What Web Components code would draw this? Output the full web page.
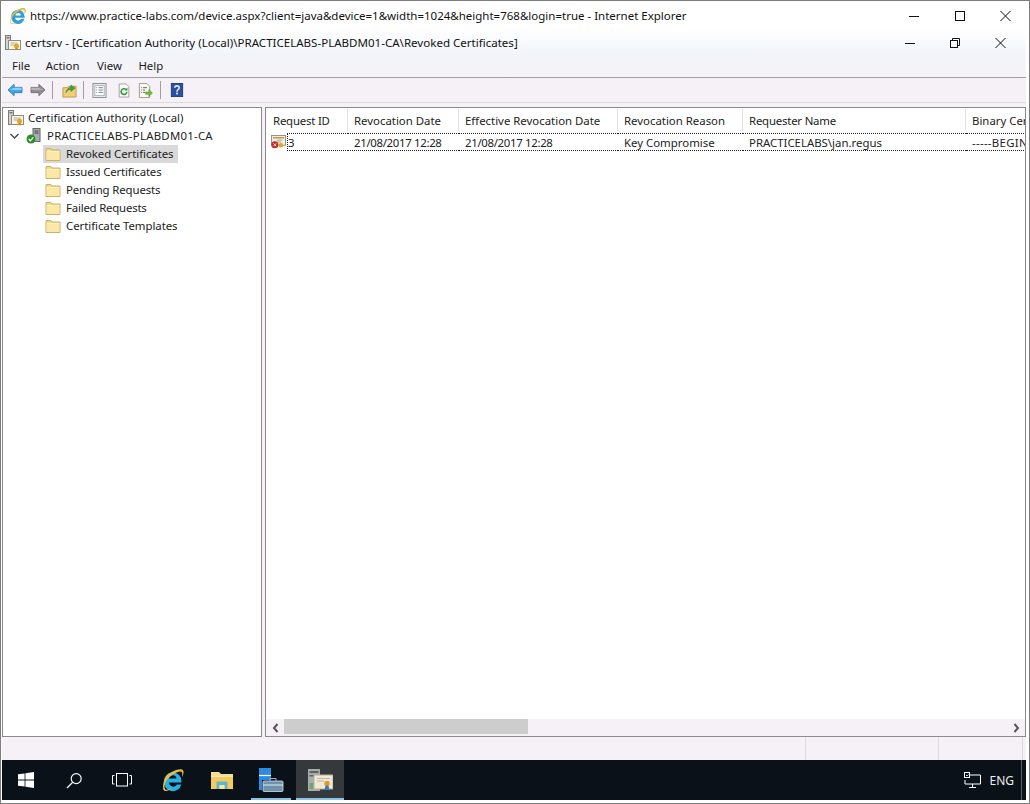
<!DOCTYPE html>
<html><head><meta charset="utf-8">
<style>html,body{margin:0;padding:0;background:#fff}body{width:1030px;height:804px;overflow:hidden;font:11.4px "Noto Sans","Open Sans",sans-serif;color:#1a1a1a}</style>
</head><body>
<template id="icons">
<svg data-n="ie" viewBox="0 0 22 22"><path d="M3 13a8 8 0 0 1 15-5l1.500 5H7.500a4 4 0 0 0 7.500 1.500h3.800A8 8 0 0 1 3 13z" fill="#2f9fd8"/><path d="M8 10.500h6.500a3.200 3.200 0 0 0-6.500 0z" fill="#fff"/><path d="M4.500 8C8 4 15 .5 19 1.500c2.500 1 1.500 5-.5 8 .5-3 1-5.500-1-6C14 3 8 7 5 11c-3 4-3.500 8-1.500 9 2 .8 5-.8 7-2-3 3-7.500 4-8.500 2-1-2.500.5-8 2.500-12z" fill="#e8b63c"/></svg>
<svg data-n="cert" viewBox="0 0 16 16"><rect x="0.500" y="0.500" width="5" height="14" fill="#d5d5d5" stroke="#7b7b7b"/><rect x="1.500" y="2" width="3" height="1.500" fill="#777"/><rect x="3.500" y="5.500" width="12" height="9" fill="#fbf6e4" stroke="#8c8c80"/><path d="M5.500 8h7M5.500 10h4" stroke="#b5b09a"/><circle cx="11.500" cy="11" r="2.500" fill="#e2a52c"/><path d="M10.500 13l-.5 2.500 1.500-1 1.500 1-.5-2.500z" fill="#c9841c"/></svg>
<svg data-n="ca" viewBox="0 0 16 16"><rect x="7" y="0.500" width="7" height="13" fill="#a9adb0" stroke="#63686c"/><path d="M8.500 3h4M8.500 5h4" stroke="#3d4347"/><circle cx="5" cy="11" r="4.500" fill="#2c8f2c"/><path d="M2.800 11l1.600 1.700 2.900-3.300" fill="none" stroke="#fff" stroke-width="1.300"/></svg>
<svg data-n="folder" viewBox="0 0 16 16"><path d="M1 2.500h5l1 1.500h8v10.500H1z" fill="#f4d98a" stroke="#cdb06a"/><rect x="1.500" y="5" width="13" height="9" fill="#fbe7a6"/><path d="M2 5.500h12" stroke="#fff3c8"/></svg>
<svg data-n="back" viewBox="0 0 18 16"><path d="M1 8l7-6.500V5h9v6H8v3.500z" fill="#3fa4e8" stroke="#2a7fc0"/><path d="M8 5.500h8.500V8H3z" fill="#8fd0f5"/></svg>
<svg data-n="fwd" viewBox="0 0 18 16"><path d="M17 8l-7-6.500V5H1v6h9v3.500z" fill="#8f8f8f" stroke="#6f6f6f"/><path d="M10 5.500H1.500V8H15z" fill="#b5b5b5"/></svg>
<svg data-n="up" viewBox="0 0 16 16"><path d="M1 5h5l1-1.500h8v11.500H1z" fill="#f0cf76" stroke="#b59b52"/><path d="M4 10.500C5 6.500 7.500 4.500 9.500 4.500V2L14 5.500 9.500 9V6.800c-2 0-4 1.200-5.500 3.700z" fill="#3fa23f" stroke="#2b7d2b" stroke-width=".5"/></svg>
<svg data-n="props" viewBox="0 0 16 16"><rect x="1" y="0.500" width="14" height="15" fill="#eef1f3" stroke="#8a9095"/><rect x="3" y="2.500" width="10" height="11" fill="#fff" stroke="#a8adb1"/><path d="M4.500 5h1M7 5h4.500M4.500 7.500h1M7 7.500h4.500M4.500 10h1M7 10h4.500" stroke="#6f7a83"/></svg>
<svg data-n="refresh" viewBox="0 0 16 16"><path d="M2.500 0.500h8l3 3v12h-11z" fill="#fbfbfb" stroke="#9a9a9a"/><path d="M11.300 9.500a3.300 3.300 0 1 1-1-2.600" fill="none" stroke="#2f9c3a" stroke-width="1.800"/><path d="M12 4.500v3.500H8.500z" fill="#2f9c3a"/></svg>
<svg data-n="export" viewBox="0 0 16 16"><path d="M1.500 0.500h8l3 3v12h-11z" fill="#fbfbf2" stroke="#9a9a8c"/><path d="M3.500 5h1M5.500 5h4M3.500 7.500h1M5.500 7.500h2M3.500 10h1M5.500 10h2" stroke="#555"/><path d="M8 9.500h3.500V7l4 3.700-4 3.700V12H8z" fill="#6dbb3c" stroke="#4b962a" stroke-width=".5"/></svg>
<svg data-n="help" viewBox="0 0 16 16"><rect x="1.500" y="0.500" width="13" height="15" fill="#2a4fa3" stroke="#1d3878"/><path d="M5.500 5.500C5.500 2.500 10.500 2.500 10.500 5.500 10.500 7.500 8 7.500 8 10" fill="none" stroke="#e8eefa" stroke-width="1.800"/><rect x="7" y="11" width="2" height="2" fill="#e8eefa"/></svg>
<svg data-n="revoked" viewBox="0 0 17 15"><rect x="0.500" y="0.500" width="15" height="10.500" fill="#f4efe0" stroke="#8e8e80"/><path d="M2 3h12" stroke="#b5823c" stroke-width="1.300"/><path d="M6 5.500h6M6 7.500h5" stroke="#a8a89a"/><circle cx="4" cy="10.500" r="3.800" fill="#c42a2a"/><path d="M2.500 9l3 3m0-3l-3 3" stroke="#fff"/><circle cx="10.500" cy="11" r="2.500" fill="#e2a52c"/></svg>
<svg data-n="win" viewBox="0 0 16 16"><path d="M0 2.300 6.600 1.400V7.600H0zM7.400 1.300 16 0V7.600H7.400zM0 8.400H6.600V14.600L0 13.700zM7.400 8.400H16V16L7.400 14.700z" fill="#fff"/></svg>
<svg data-n="search" viewBox="0 0 18 18"><circle cx="10.800" cy="7" r="5.300" fill="none" stroke="#fff" stroke-width="1.200"/><path d="M7 11 1 17" stroke="#fff" stroke-width="1.400"/></svg>
<svg data-n="taskview" viewBox="0 0 20 14"><rect x="4.500" y="0.500" width="11" height="12.500" fill="none" stroke="#fff"/><path d="M2.500 2.500H.5v8.500h2M17.500 2.500h2v8.500h-2" fill="none" stroke="#fff"/></svg>
<svg data-n="tbie" viewBox="0 0 22 24"><path d="M2 13.500a8.800 8.800 0 0 1 17-3.500l.5 4.500H7a4.500 4.500 0 0 0 8.300 2h4A8.800 8.800 0 0 1 2 13.500z" fill="#27b0e6"/><path d="M7 10.500h7.500a3.800 3.800 0 0 0-7.500 0z" fill="#0a1118"/><path d="M3.500 9C8 4 16 .5 20 1.500c2.500 1 1.500 5 0 7.500 .5-3 .5-5-1-5.500C15 3 8 8 5 12c-3 4-3 8-1.500 9.500 2 1 5-.8 7-2-3 3-7.500 4.500-9 2.500C.5 20 1 14 3.500 9z" fill="#e7bb44"/></svg>
<svg data-n="tbfolder" viewBox="0 0 22 17"><path d="M0 0h8l2 2h12v15H0z" fill="#f2dfa0"/><rect x="0" y="4" width="22" height="13" fill="#f7ca5c"/><rect x="0" y="4" width="22" height="1" fill="#fbe9b4"/><path d="M5.500 9.500h11V17H13.500V13h-5v4H5.500z" fill="#5fb5d0"/><rect x="8.500" y="13" width="5" height="4" fill="#fbe3a0"/></svg>
<svg data-n="tbserver" viewBox="0 0 25 24"><rect x="0" y="0" width="12" height="22" fill="#2f8be0"/><path d="M0 7.500h12" stroke="#fff" stroke-width="1.200"/><rect x="3" y="12" width="22" height="12" fill="#0a1118"/><rect x="4" y="13" width="20" height="10.500" rx="1" fill="#6f93ad" stroke="#d5e2ea" stroke-width=".8"/><path d="M4 17h20" stroke="#dfe9ef"/><path d="M11 13v-2.500h6V13" fill="none" stroke="#aac"/></svg>
<svg data-n="tbcert" viewBox="0 0 25 23"><rect x="0" y="0" width="12" height="22" fill="#a8acaa"/><rect x="1.500" y="2" width="9" height="2" fill="#5d615f"/><rect x="1.500" y="6" width="9" height="1.500" fill="#5d615f"/><rect x="1.500" y="14" width="4" height="6" fill="#74a06c"/><rect x="6" y="6" width="19" height="14" fill="#f0e8d4" stroke="#b4ae9a"/><path d="M9 9.500h13M9 12h7" stroke="#bdb6a2"/><circle cx="19" cy="14.500" r="2.700" fill="#dd9a2a"/><path d="M17.500 16.500l-1 5 2.500-1.500 2.500 1.500-1-5z" fill="#3f78b0"/></svg>
<svg data-n="net" viewBox="0 0 17 16"><path d="M3.500 3H16.500V12H1V8" fill="none" stroke="#fff"/><rect x="0.500" y="0.500" width="5" height="5" fill="#0a1118" stroke="#fff"/><path d="M2 3l1 1 1.500-1.500" stroke="#fff" fill="none" stroke-width=".8"/><path d="M8.500 12v3M5 15.500h7" stroke="#fff"/></svg>
</template>
<script>
const iconSource=document.getElementById('icons').content;
class XIcon extends HTMLElement{
  connectedCallback(){
    const s=this.shadowRoot||this.attachShadow({mode:'open'});
    const w=this.getAttribute('w')||16,h=this.getAttribute('h')||16;
    s.innerHTML=`<style>:host{display:inline-flex;flex:none;width:${w}px;height:${h}px}svg{width:100%;height:100%;display:block}</style>`;
    const svg=iconSource.querySelector(`[data-n="${this.getAttribute('name')}"]`);
    if(svg)s.appendChild(svg.cloneNode(true));
  }
}
customElements.define('x-icon',XIcon);

function def(name,html){
  customElements.define(name,class extends HTMLElement{
    constructor(){super();this.attachShadow({mode:'open'}).innerHTML=html;}
  });
}
def('ie-titlebar',`<style>
:host{display:flex;align-items:center;height:27px;padding-left:7px;background:#fff;flex:none;font-size:11.5px;color:#111}
.t{margin-left:3px;flex:1;white-space:nowrap}
.c{display:flex;padding-right:1px}
svg{display:block;stroke:#111;fill:none}
span.b{width:45.5px;height:12px;display:flex;justify-content:center}
</style><x-icon name="ie" w="18" h="18"></x-icon><span class="t"><slot></slot></span>
<div class="c">
<span class="b"><svg width="10" height="12"><path d="M0 6.500h10"/></svg></span>
<span class="b"><svg width="10" height="12"><rect x=".5" y="1.500" width="9" height="9"/></svg></span>
<span class="b"><svg width="11" height="12"><path d="M.5 1l10 10m0-10l-10 10"/></svg></span>
</div>`);
def('mmc-titlebar',`<style>
:host{display:flex;align-items:center;height:27px;padding-left:3px;flex:none;font-size:11.55px;color:#111}
.t{margin-left:4px;flex:1;white-space:nowrap}
.c{display:flex;padding-right:2.500px}
svg{display:block;stroke:#111;fill:none}
span.b{width:45.5px;height:12px;display:flex;justify-content:center}
</style><x-icon name="cert" w="16" h="16"></x-icon><span class="t"><slot></slot></span>
<div class="c">
<span class="b"><svg width="10" height="12"><path d="M0 6.500h10"/></svg></span>
<span class="b"><svg width="10" height="12"><rect x=".5" y="3.500" width="7" height="7"/><path d="M2.500 3.500V1.500h7v7h-2"/></svg></span>
<span class="b"><svg width="11" height="12"><path d="M.5 1l10 10m0-10l-10 10"/></svg></span>
</div>`);
def('menu-bar',`<style>
:host{display:flex;height:18px;padding-bottom:3px;align-items:center;flex:none;padding-left:1px;border-bottom:1px solid #a0a0a0}
</style><slot></slot>`);
def('menu-item',`<style>:host{display:block;padding:0 8.500px 0 9px}</style><slot></slot>`);
def('tool-bar',`<style>
:host{display:flex;align-items:center;height:24px;padding-left:5px;flex:none;border-bottom:1px solid #dcdcdc}
</style><slot></slot>`);
def('tool-sep',`<style>:host{display:block;flex:none;width:1px;height:18px;background:#a0a0a0}</style>`);
def('split-panes',`<style>:host{display:flex;gap:3px;flex:1;min-height:0;padding-top:4px}</style><slot></slot>`);
def('tree-pane',`<style>:host{display:block;flex:none;width:260px;background:#fff;border:1px solid #8a8a8a;padding-top:1px;box-sizing:border-box}</style><slot></slot>`);
def('tree-row',`<style>
:host{display:flex;align-items:center;height:18px;white-space:nowrap;color:#222}
.lab{padding:0 4px;height:18px;line-height:17px}
:host([selected]) .sel{background:#d9d9d9}
.sel{display:flex;align-items:center;height:18px}
</style><slot name="tw"></slot><div class="sel"><slot name="icon"></slot><span class="lab"><slot></slot></span></div>`);
def('list-pane',`<style>:host{display:flex;flex-direction:column;flex:1;min-width:0;background:#fff;border:1px solid #8a8a8a;box-sizing:border-box;overflow:hidden}</style><slot></slot>`);
def('list-header',`<style>:host{display:grid;grid-template-columns:82px 111px 159px 125px 223px 200px;height:22px;margin-top:1px;flex:none;width:max-content}</style><slot></slot>`);
def('list-col',`<style>:host{display:flex;align-items:center;padding-left:6px;box-sizing:border-box;border-right:1px solid #e3e3e3;white-space:nowrap;color:#222;overflow:hidden;height:22px}
:host([first]){padding-left:7px;letter-spacing:-.2px}</style><slot></slot>`);
def('list-row',`<style>:host{display:grid;grid-template-columns:21px 61px 111px 159px 125px 223px 200px;height:18px;margin-top:2px;flex:none;width:max-content;align-items:center}</style><slot></slot>`);
def('list-cell',`<style>:host{display:block;padding-left:6px;white-space:nowrap;color:#222;line-height:17px;height:18px;box-sizing:border-box;border-top:1px dotted #222;border-bottom:1px dotted #222;overflow:hidden}
:host([first]){padding-left:0;border-left:1px dotted #222}
:host([date]){letter-spacing:-.32px}
:host([wide]){letter-spacing:.3px}</style><slot></slot>`);
def('h-scroll',`<style>
:host{display:flex;height:17px;flex:none;margin-top:auto;background:#f6f1f6;align-items:center}
.a{width:18px;display:flex;justify-content:center;flex:none}
.tr{flex:1;height:15px;align-self:flex-start}
.th{width:244px;height:15px;background:#cdcdcd}
svg{display:block}
</style><span class="a"><svg width="7" height="10"><path d="M5.500 1L2 5l3.500 4" fill="none" stroke="#555" stroke-width="2"/></svg></span>
<div class="tr"><div class="th"></div></div>
<span class="a"><svg width="7" height="10"><path d="M1.500 1L5 5 1.500 9" fill="none" stroke="#555" stroke-width="2"/></svg></span>`);
def('status-bar',`<style>
:host{display:grid;grid-template-columns:804px 133px 84px 1fr;height:23px;flex:none}
div{border-right:1px solid #dcdcdc}
div:last-child{border:0}
</style><div></div><div></div><div></div><div></div>`);
def('task-bar',`<style>
:host{display:flex;align-items:center;height:40px;background:#0a1118;flex:none;color:#fff}
.end{margin-left:auto;display:flex;align-items:center;height:100%;padding-right:4px}
.lang{font-size:12px;margin-left:8px;margin-right:7px;color:#eee}
.edge{width:1px;height:100%;background:#5a6066}
</style><slot></slot><div class="end"><x-icon name="net" w="17" h="16"></x-icon><span class="lang">ENG</span><div class="edge"></div></div>`);
def('task-btn',`<style>
:host{display:flex;flex:none;width:48px;height:40px;align-items:center;justify-content:center;box-sizing:border-box;position:relative}
:host([running])::after{content:"";position:absolute;left:4px;right:4px;bottom:0;height:2px;background:#8ac3e6}
:host([active]){background:#35393c}
:host([active])::after{content:"";position:absolute;left:0;right:0;bottom:0;height:2px;background:#8ac3e6}
</style><slot></slot>`);
def('app-frame',`<style>
:host{display:flex;flex-direction:column;box-sizing:border-box;width:1030px;height:804px;border:1px solid #7d7d7d;padding:1px 0 0 1px;background:#fff}
.desk{flex:1;display:flex;flex-direction:column;min-height:0;margin-right:3px}
.inner{flex:1;display:flex;flex-direction:column;min-height:0;background:linear-gradient(#fff 0,#f1f5fa 26px,#f6f1f6 54px)}
.bottom{height:3px;flex:none;background:#fff}
</style><slot name="top"></slot><div class="desk"><div class="inner"><slot></slot></div><slot name="bar"></slot></div><div class="bottom"></div>`);
</script>
<app-frame>
  <ie-titlebar slot="top">https://www.practice-labs.com/device.aspx?client=java&amp;device=1&amp;width=1024&amp;height=768&amp;login=true - Internet Explorer</ie-titlebar>
  <mmc-titlebar>certsrv - [Certification Authority (Local)\PRACTICELABS-PLABDM01-CA\Revoked Certificates]</mmc-titlebar>
  <menu-bar><menu-item style="margin-right:-2px">File</menu-item><menu-item>Action</menu-item><menu-item>View</menu-item><menu-item style="margin-left:-1px">Help</menu-item></menu-bar>
  <tool-bar>
    <x-icon name="back" w="16" h="14"></x-icon><x-icon name="fwd" w="16" h="14" style="margin-left:7px"></x-icon><tool-sep style="margin:0 9px 0 6px"></tool-sep>
    <x-icon name="up" w="15" h="15"></x-icon><tool-sep style="margin:0 8px 0 6px"></tool-sep>
    <x-icon name="props" w="15" h="15"></x-icon><x-icon name="refresh" w="14" h="15" style="margin-left:10px"></x-icon><x-icon name="export" w="15" h="15" style="margin-left:7px"></x-icon><tool-sep style="margin:0 9px 0 7px"></tool-sep>
    <x-icon name="help" w="14" h="16"></x-icon>
  </tool-bar>
  <split-panes>
    <tree-pane>
      <tree-row><span slot="tw" style="width:5px"></span><x-icon slot="icon" name="cert"></x-icon>Certification Authority (Local)</tree-row>
      <tree-row><span slot="tw" style="display:flex;width:22px;padding-left:7px;box-sizing:border-box"><svg width="10" height="18"><path d="M.5 7 4.500 11 8.500 7" fill="none" stroke="#444" stroke-width="1.300"/></svg></span><x-icon slot="icon" name="ca" style="margin-left:1px"></x-icon><span style="margin-left:1px;letter-spacing:.25px">PRACTICELABS-PLABDM01-CA</span></tree-row>
      <tree-row selected><span slot="tw" style="width:40px"></span><x-icon slot="icon" name="folder" style="margin-left:2px"></x-icon><span style="margin-left:1px;letter-spacing:-.05px">Revoked Certificates</span></tree-row>
      <tree-row><span slot="tw" style="width:40px"></span><x-icon slot="icon" name="folder" style="margin-left:2px"></x-icon><span style="margin-left:1px;letter-spacing:-.15px">Issued Certificates</span></tree-row>
      <tree-row><span slot="tw" style="width:40px"></span><x-icon slot="icon" name="folder" style="margin-left:2px"></x-icon><span style="margin-left:1px;letter-spacing:-.12px">Pending Requests</span></tree-row>
      <tree-row><span slot="tw" style="width:40px"></span><x-icon slot="icon" name="folder" style="margin-left:2px"></x-icon><span style="margin-left:1px;letter-spacing:-.2px">Failed Requests</span></tree-row>
      <tree-row><span slot="tw" style="width:40px"></span><x-icon slot="icon" name="folder" style="margin-left:2px"></x-icon><span style="margin-left:1px;letter-spacing:-.05px">Certificate Templates</span></tree-row>
    </tree-pane>
    <list-pane>
      <list-header><list-col first>Request ID</list-col><list-col>Revocation Date</list-col><list-col>Effective Revocation Date</list-col><list-col>Revocation Reason</list-col><list-col><span style="letter-spacing:-.2px">Requester Name</span></list-col><list-col>Binary Certificate</list-col></list-header>
      <list-row><x-icon name="revoked" w="16" h="14" style="margin-left:5px"></x-icon><list-cell first>3</list-cell><list-cell date>21/08/2017 12:28</list-cell><list-cell date>21/08/2017 12:28</list-cell><list-cell>Key Compromise</list-cell><list-cell>PRACTICELABS\jan.regus</list-cell><list-cell wide>-----BEGIN CERTIFICATE-----</list-cell></list-row>
      <h-scroll></h-scroll>
    </list-pane>
  </split-panes>
  <status-bar></status-bar>
  <task-bar slot="bar">
    <task-btn><x-icon name="win"></x-icon></task-btn>
    <task-btn><x-icon name="search" w="17" h="17"></x-icon></task-btn>
    <task-btn><x-icon name="taskview" w="20" h="14"></x-icon></task-btn>
    <task-btn style="margin-left:3px"><x-icon name="tbie" w="22" h="24"></x-icon></task-btn>
    <task-btn style="margin-left:1px"><x-icon name="tbfolder" w="22" h="17"></x-icon></task-btn>
    <task-btn running style="margin-left:1px"><x-icon name="tbserver" w="25" h="24"></x-icon></task-btn>
    <task-btn active style="margin-left:1px"><x-icon name="tbcert" w="25" h="23"></x-icon></task-btn>
  </task-bar>
</app-frame>
</body></html>
